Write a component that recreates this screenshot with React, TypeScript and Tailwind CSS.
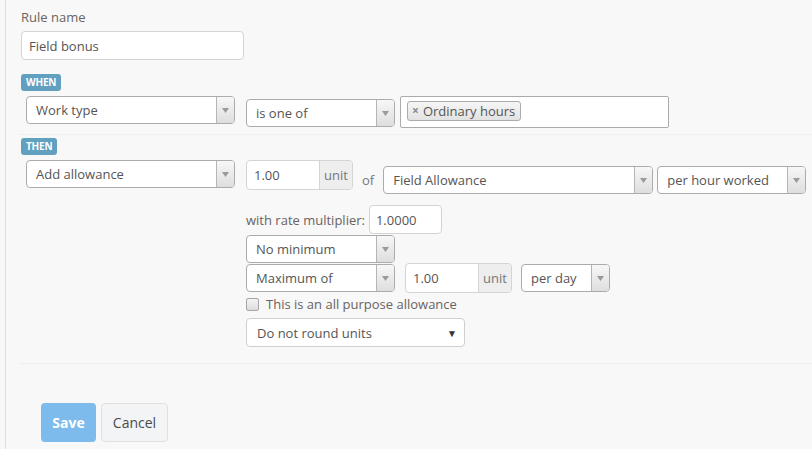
import React from "react";

function Arrow() {
  return (
    <div className="flex h-full w-[18px] shrink-0 items-center justify-center rounded-r-[3px] border-l border-[#b5b5b5] bg-gradient-to-b from-[#f7f7f7] to-[#dedede]">
      <svg width="7" height="5" viewBox="0 0 7 5">
        <path d="M0 0 L7 0 L3.5 5 Z" fill="#9a9a9a" />
      </svg>
    </div>
  );
}

function Select({ label, w, cls = "" }: { label: string; w: string; cls?: string }) {
  return (
    <div className={`flex h-[28px] shrink-0 items-center rounded-[4px] border border-[#ababab] bg-white ${w} ${cls}`}>
      <div className="flex-1 overflow-hidden whitespace-nowrap pl-[9px] text-[13px] leading-[18px] text-[#555]">{label}</div>
      <Arrow />
    </div>
  );
}

function Badge({ text }: { text: string }) {
  return (
    <div className="flex h-[17px] items-center rounded-[3px] bg-[#61a0bf] px-[5px] text-[10px] font-bold leading-[17px] tracking-[-0.2px] text-white">
      {text}
    </div>
  );
}

function UnitInput({ value, w, cls = "" }: { value: string; w: string; cls?: string }) {
  return (
    <div className={`flex h-[30px] shrink-0 rounded-[4px] border border-[#d4d4d4] bg-white ${w} ${cls}`}>
      <div className="flex flex-1 items-center pl-[7px] text-[13px] leading-[18px] text-[#555]">{value}</div>
      <div className="flex w-[33px] items-center justify-center rounded-r-[4px] border-l border-[#d4d4d4] bg-[#eeeeee] text-[13px] leading-[18px] text-[#777]">
        unit
      </div>
    </div>
  );
}

export default function App() {
  return (
    <div
      className="flex h-[449px] w-[812px] overflow-hidden bg-[#f8f8f8] text-[#555]"
      style={{ fontFamily: '"Open Sans", "Liberation Sans", sans-serif' }}
    >
      <div className="w-[5px] shrink-0" />
      <div className="flex flex-1 flex-col border-l border-[#dedede] pl-[15px] pt-[9px] [&>*]:shrink-0">
        <div className="h-[16px] text-[13px] leading-[16px] text-[#6a6360]">Rule name</div>
        <div className="mt-[6px] flex h-[29px] w-[223px] items-center rounded-[4px] border border-[#d4d4d4] bg-white pl-[7px] text-[13px] leading-[18px] text-[#555]">
          Field bonus
        </div>

        <div className="mt-[14px] flex">
          <Badge text="WHEN" />
        </div>
        <div className="mt-[5px] flex items-start">
          <Select label="Work type" w="w-[209px]" cls="ml-[5px]" />
          <Select label="is one of" w="w-[149px]" cls="ml-[11px] mt-[3px]" />
          <div className="ml-[5px] flex h-[32px] w-[269px] items-start rounded-[2px] border border-[#ababab] bg-white pl-[6px] pt-[4px]">
            <div className="flex h-[20px] items-center rounded-[3px] border border-[#acacac] bg-gradient-to-b from-[#f6f6f6] to-[#e2e2e2] pl-[4px] pr-[5px] text-[13px] leading-[18px] text-[#555]">
              <span className="mr-[4px] text-[12px] font-bold leading-none text-[#8a8a8a]">×</span>
              Ordinary hours
            </div>
          </div>
        </div>

        <div className="mt-[6px] -ml-[1px] border-t border-[#efefef]" />

        <div className="mt-[3px] flex">
          <Badge text="THEN" />
        </div>
        <div className="mt-[5px] flex items-start">
          <Select label="Add allowance" w="w-[209px]" cls="ml-[5px]" />
          <UnitInput value="1.00" w="w-[107px]" cls="ml-[11px]" />
          <div className="ml-[9px] mt-[11px] text-[13px] leading-[18px] text-[#777]">of</div>
          <Select label="Field Allowance" w="w-[270px]" cls="ml-[9px] mt-[6px]" />
          <Select label="per hour worked" w="w-[149px]" cls="ml-[4px] mt-[6px]" />
        </div>

        <div className="ml-[225px] mt-[11px] flex flex-col items-start">
          <div className="flex items-center">
            <span className="text-[13px] leading-[18px] text-[#6a6360]">with rate multiplier:</span>
            <div className="ml-[4px] flex h-[29px] w-[73px] items-center rounded-[4px] border border-[#d4d4d4] bg-white pl-[6px] text-[13px] leading-[18px] text-[#555]">
              1.0000
            </div>
          </div>
          <Select label="No minimum" w="w-[149px]" cls="mt-[1px]" />
          <div className="mt-[1px] flex items-start">
            <Select label="Maximum of" w="w-[149px]" />
            <UnitInput value="1.00" w="w-[107px]" cls="ml-[10px] -mt-[1px]" />
            <Select label="per day" w="w-[89px]" cls="ml-[9px]" />
          </div>
          <div className="mt-[3px] flex items-center">
            <div className="h-[13px] w-[13px] rounded-[2px] border border-[#a6a6a6] bg-gradient-to-b from-[#f4f4f4] to-[#dcdcdc]" />
            <span className="ml-[7px] text-[13px] leading-[16px] text-[#6a6360]">This is an all purpose allowance</span>
          </div>
          <div className="mt-[6px] flex h-[29px] w-[219px] items-center justify-between rounded-[4px] border border-[#cfcfcf] bg-white pl-[10px] pr-[7px] text-[13px] leading-[18px] text-[#555]">
            <span>Do not round units</span>
            <span className="text-[10px] leading-[12px] text-[#333]">▼</span>
          </div>
        </div>

        <div className="mt-[16px] -ml-[1px] border-t border-[#efefef]" />

        <div className="ml-[20px] mt-[39px] flex">
          <div className="flex h-[39px] w-[55px] items-center justify-center rounded-[4px] bg-[#7dbbec] text-[14px] font-bold leading-[18px] text-white">
            Save
          </div>
          <div className="ml-[5px] flex h-[39px] w-[67px] items-center justify-center rounded-[4px] border border-[#e0e0e0] bg-[#f3f4f6] text-[14px] leading-[18px] text-[#4a4a4a]">
            Cancel
          </div>
        </div>
      </div>
    </div>
  );
}
